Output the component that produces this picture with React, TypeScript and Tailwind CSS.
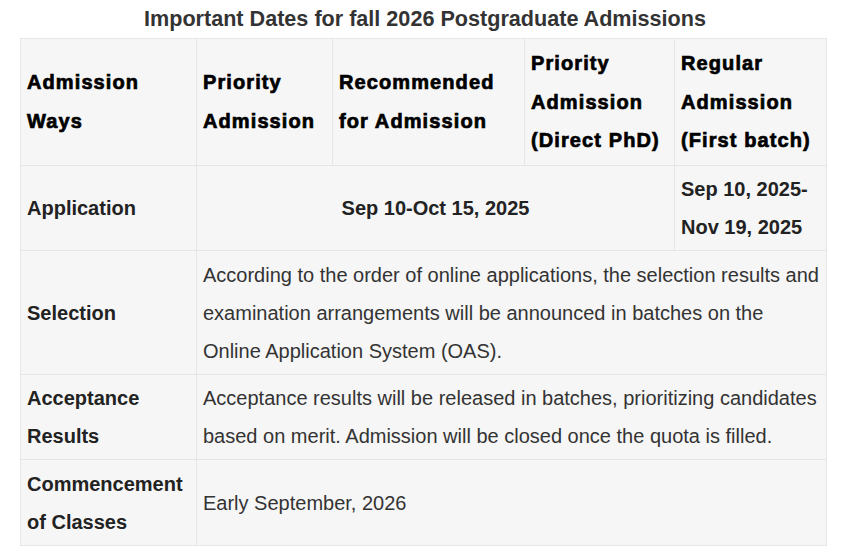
import React from 'react';

const headCell =
  "border border-[#e6e6e6] px-[6px] py-[5px] text-left align-middle text-[20px] leading-[38.5px] font-bold text-black tracking-[1.1px] [-webkit-text-stroke:0.7px_#000]";
const rowHead =
  "border border-[#e6e6e6] px-[6px] pt-[4.5px] pb-[4px] text-left align-middle text-[20px] leading-[38px] font-bold text-[#222]";
const bodyCell =
  "border border-[#e6e6e6] px-[6px] pt-[4.5px] pb-[4px] text-left align-middle text-[20px] leading-[38px] text-[#333]";

export default function App() {
  return (
    <div className="w-[850px] h-[556px] bg-white font-['Liberation_Sans',Arial,sans-serif]">
      <h1 className="h-[38px] flex items-center justify-center text-[21.6px] font-bold text-[#333]">
        Important Dates for fall 2026 Postgraduate Admissions
      </h1>
      <table className="ml-[20px] w-[806px] table-fixed border-collapse bg-[#f6f6f6]">
        <colgroup>
          <col className="w-[176px]" />
          <col className="w-[136px]" />
          <col className="w-[192px]" />
          <col className="w-[150px]" />
          <col className="w-[152px]" />
        </colgroup>
        <thead>
          <tr>
            <th className={headCell}>Admission<br />Ways</th>
            <th className={headCell}>Priority<br />Admission</th>
            <th className={headCell}>Recommended<br />for Admission</th>
            <th className={headCell}>Priority<br />Admission<br />(Direct PhD)</th>
            <th className={headCell}>Regular<br />Admission<br />(First batch)</th>
          </tr>
        </thead>
        <tbody>
          <tr>
            <td className={rowHead}>Application</td>
            <td colSpan={3} className={rowHead + " !text-center"}>Sep 10-Oct 15, 2025</td>
            <td className={rowHead}>Sep 10, 2025-<br />Nov 19, 2025</td>
          </tr>
          <tr>
            <td className={rowHead}>Selection</td>
            <td colSpan={4} className={bodyCell}>
              According to the order of online applications, the selection results and
              examination arrangements will be announced in batches on the Online
              Application System (OAS).
            </td>
          </tr>
          <tr>
            <td className={rowHead}>Acceptance<br />Results</td>
            <td colSpan={4} className={bodyCell}>
              Acceptance results will be released in batches, prioritizing candidates
              based on merit. Admission will be closed once the quota is filled.
            </td>
          </tr>
          <tr>
            <td className={rowHead}>Commencement<br />of Classes</td>
            <td colSpan={4} className={bodyCell}>Early September, 2026</td>
          </tr>
        </tbody>
      </table>
    </div>
  );
}
